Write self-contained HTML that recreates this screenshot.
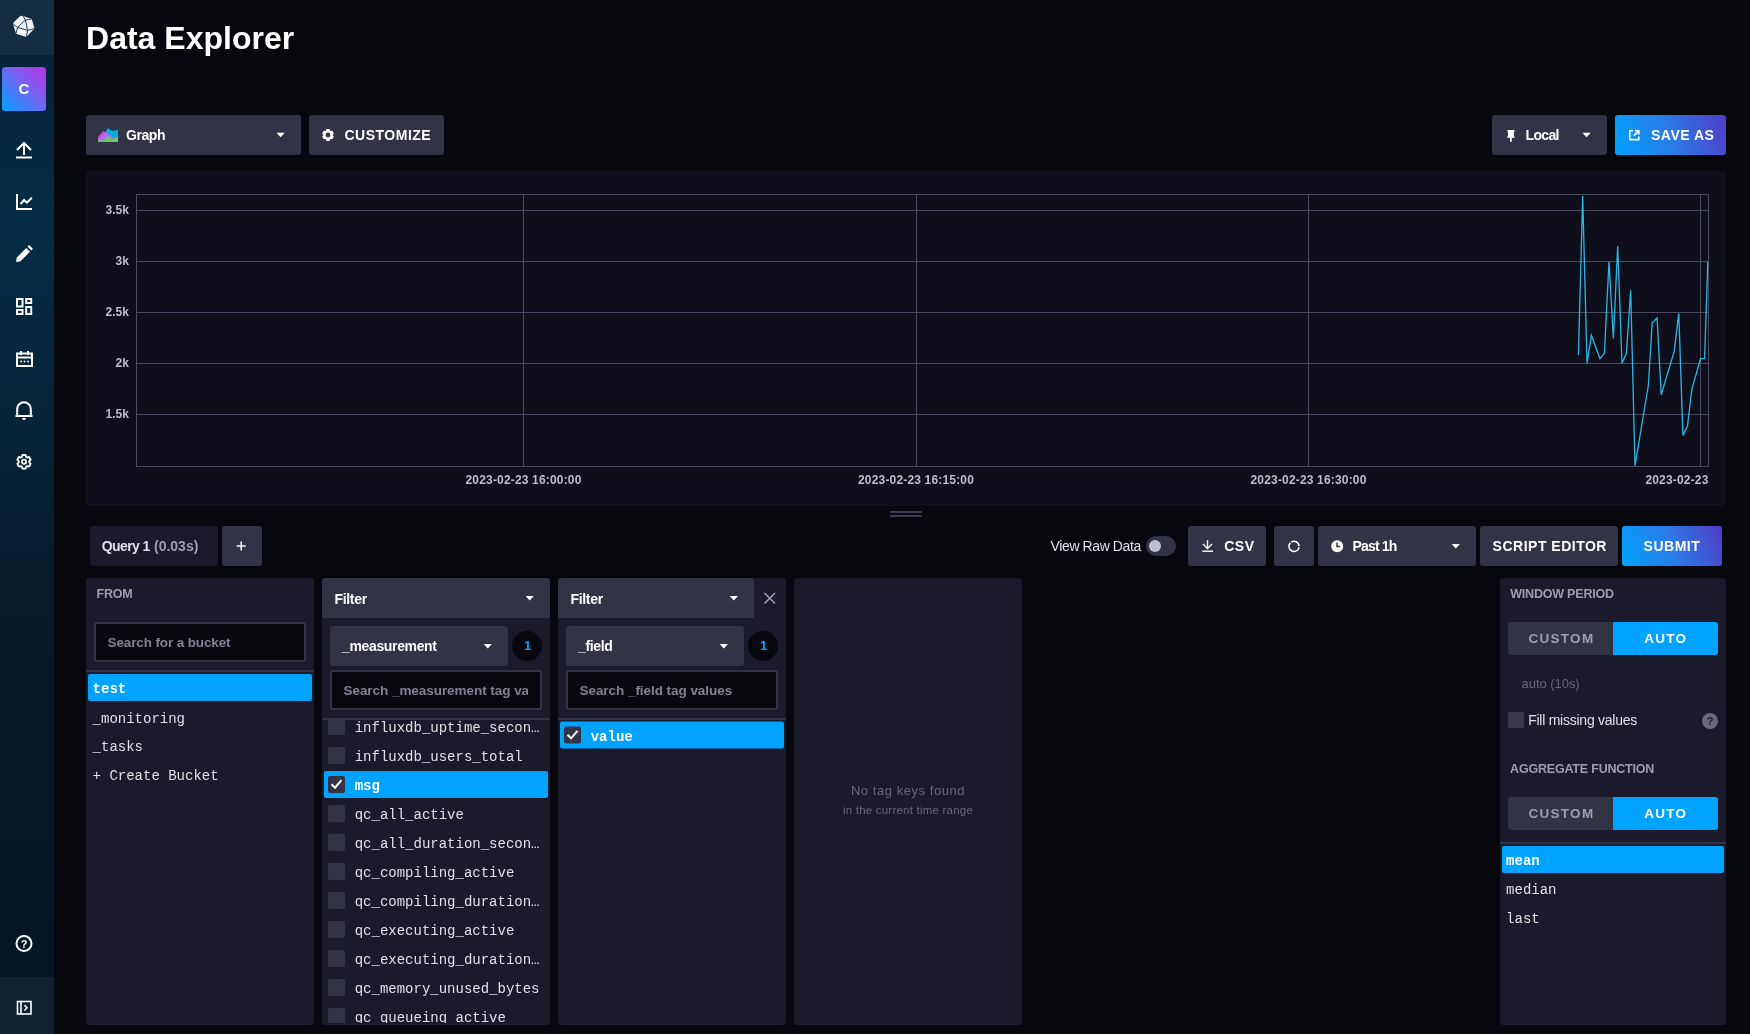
<!DOCTYPE html>
<html><head><meta charset="utf-8">
<style>
*{margin:0;padding:0}
html,body{width:1750px;height:1034px;overflow:hidden;background:#07070e}
svg{display:block}
.root{will-change:transform}
text{white-space:pre}
</style></head><body>
<svg class="root" width="1750" height="1034" viewBox="0 0 1750 1034">
<defs>
<linearGradient id="sideGrad" gradientUnits="userSpaceOnUse" x1="0" y1="55" x2="0" y2="977"><stop offset="0" stop-color="#06233a"/><stop offset="0.18" stop-color="#052c47"/><stop offset="0.35" stop-color="#05263c"/><stop offset="0.59" stop-color="#061b2b"/><stop offset="1" stop-color="#051725"/></linearGradient>
<linearGradient id="gradAvatar" x1="0" y1="1" x2="1" y2="0"><stop offset="0" stop-color="#00a3ff"/><stop offset="0.6" stop-color="#7d5ef0"/><stop offset="1" stop-color="#be2ee4"/></linearGradient>
<linearGradient id="gradBtn1" gradientUnits="userSpaceOnUse" x1="1615" y1="155" x2="1726" y2="115"><stop offset="0" stop-color="#00a3ff"/><stop offset="0.5" stop-color="#2b7ae6"/><stop offset="1" stop-color="#513cc6"/></linearGradient>
<linearGradient id="gradBtn2" gradientUnits="userSpaceOnUse" x1="1622" y1="566" x2="1722" y2="526"><stop offset="0" stop-color="#00a3ff"/><stop offset="0.5" stop-color="#2b7ae6"/><stop offset="1" stop-color="#513cc6"/></linearGradient>
</defs>

<rect x="0" y="0" width="54" height="1034" fill="url(#sideGrad)"/>
<rect x="0" y="0" width="54" height="55" fill="#132d43"/>
<rect x="0" y="977" width="54" height="57" fill="#122132"/>
<rect x="2" y="67" width="44" height="44" rx="3" fill="url(#gradAvatar)"/>
<polygon points="20.6,15.8 23,16 31.7,19 34.6,28.5 26.2,36.9 16,33.7 13.2,24.2 13.5,22.6" fill="#f1f1f3"/>
<g stroke="#132d43" stroke-width="0.9" fill="none">
<polyline points="23,16 25.4,20 17.6,27.4 13.3,24.2"/>
<polyline points="25.4,20 31.7,19"/>
<polyline points="25.4,20 27.6,30.4 34.6,28.5"/>
<polyline points="17.6,27.4 27.6,30.4 26.3,36.9"/>
<polyline points="17.6,27.4 16,33.7"/>
</g>
<g stroke="#fff" stroke-width="2" fill="none">
<polyline points="17,150 24,143 31,150"/>
<line x1="24" y1="143" x2="24" y2="155"/>
<line x1="16" y1="157.5" x2="32" y2="157.5"/>
<polyline points="17,194 17,209 32,209"/>
<polyline points="20.6,204 24.1,200 26.9,202.7 31.9,197.8"/>
<rect x="17" y="299" width="5.5" height="7.5"/>
<rect x="26.2" y="299" width="5" height="4"/>
<rect x="17" y="310" width="5.5" height="4"/>
<rect x="26.2" y="307" width="5" height="7"/>
<rect x="17" y="353.5" width="15" height="12.5"/>
<line x1="17" y1="357.5" x2="32" y2="357.5"/>
<line x1="21" y1="351" x2="21" y2="355"/>
<line x1="28" y1="351" x2="28" y2="355"/>
<path d="M17.2,415.5 V409 a6.8,6.8 0 0 1 13.6,0 V415.5"/>
<line x1="15.5" y1="416" x2="32.5" y2="416"/>
<circle cx="24" cy="461.8" r="2.1" stroke-width="1.8"/>
<path stroke-width="1.8" stroke-linejoin="round" d="M21.95,456.91 L22.37,454.99 L25.63,454.99 L26.05,456.91 L27.20,457.58 L29.08,456.98 L30.71,459.81 L29.26,461.14 L29.26,462.46 L30.71,463.79 L29.08,466.62 L27.20,466.02 L26.05,466.69 L25.63,468.61 L22.37,468.61 L21.95,466.69 L20.80,466.02 L18.92,466.62 L17.29,463.79 L18.74,462.46 L18.74,461.14 L17.29,459.81 L18.92,456.98 L20.80,457.58Z"/>
<circle cx="24" cy="943.5" r="7.5"/>
<rect x="17.5" y="1001.5" width="13.5" height="12.5" stroke-width="1.6"/>
<line x1="21" y1="1001.5" x2="21" y2="1014" stroke-width="1.6"/>
<polyline points="24.5,1005 27,1007.7 24.5,1010.4" stroke-width="1.5"/>
</g>
<g fill="#fff">
<circle cx="21" cy="361.5" r="0.9"/><circle cx="24.5" cy="361.5" r="0.9"/><circle cx="28" cy="361.5" r="0.9"/>
<path d="M22,418 h4 a2,2 0 0 1 -4,0z"/>
<path d="M16,262 L16.8,257.5 L26.3,248 L30,251.7 L20.5,261.2 Z"/>
<path d="M27.6,246.7 L29.2,245.1 L32.9,248.8 L31.3,250.4 Z"/>
</g>
<text x="24" y="947.6" font-family="Liberation Sans" font-weight="bold" font-size="11" fill="#fff" text-anchor="middle">?</text>
<text x="24" y="93.8" font-family="Liberation Sans" font-weight="bold" font-size="15" fill="#fff" text-anchor="middle">C</text>

<rect x="86" y="115" width="215" height="40" rx="3" fill="#333346" />
<rect x="309" y="115" width="135" height="40" rx="3" fill="#333346" />
<rect x="1492" y="115" width="115" height="40" rx="3" fill="#333346" />
<rect x="1615" y="115" width="111" height="40" rx="3" fill="url(#gradBtn1)" />
<rect x="86" y="171" width="1640" height="335" rx="4" fill="#0f0f1b" />
<rect x="890" y="511" width="32" height="2" rx="1" fill="#3e3e52" />
<rect x="890" y="515" width="32" height="2" rx="1" fill="#3e3e52" />
<rect x="90" y="526" width="128" height="40" rx="3" fill="#1a1a2a" />
<rect x="222" y="526" width="40" height="40" rx="3" fill="#333346" />
<rect x="1146" y="536" width="30" height="20" rx="10" fill="#333346" />
<rect x="1188" y="526" width="78" height="40" rx="3" fill="#333346" />
<rect x="1274" y="526" width="40" height="40" rx="3" fill="#333346" />
<rect x="1318" y="526" width="158" height="40" rx="3" fill="#333346" />
<rect x="1480" y="526" width="138" height="40" rx="3" fill="#333346" />
<rect x="1622" y="526" width="100" height="40" rx="3" fill="url(#gradBtn2)" />
<rect x="86" y="578" width="228" height="447" rx="3" fill="#1a1a2a" />
<rect x="322" y="578" width="228" height="447" rx="3" fill="#1a1a2a" />
<rect x="558" y="578" width="228" height="447" rx="3" fill="#1a1a2a" />
<rect x="794" y="578" width="228" height="447" rx="3" fill="#1a1a2a" />
<rect x="1500" y="578" width="226" height="447" rx="3" fill="#1a1a2a" />
<rect x="94" y="622" width="212" height="40" rx="2" fill="#333346" />
<rect x="96" y="624" width="208" height="36" rx="1" fill="#07070e" />
<rect x="86" y="670" width="228" height="2" rx="0" fill="#333346" />
<rect x="88" y="674" width="224" height="27" rx="2" fill="#00a3ff" />
<rect x="322" y="578" width="228" height="40" rx="4" fill="#333346" />
<rect x="322" y="600" width="228" height="18" rx="0" fill="#333346" />
<rect x="330" y="626" width="178" height="40" rx="3" fill="#333346" />
<rect x="330" y="670" width="212" height="40" rx="2" fill="#333346" />
<rect x="332" y="672" width="208" height="36" rx="1" fill="#07070e" />
<rect x="322" y="718" width="228" height="2" rx="0" fill="#333346" />
<rect x="324" y="771" width="224" height="27" rx="2" fill="#00a3ff" />
<rect x="558" y="578" width="196" height="40" rx="4" fill="#333346" />
<rect x="558" y="600" width="196" height="18" rx="0" fill="#333346" />
<rect x="566" y="626" width="178" height="40" rx="3" fill="#333346" />
<rect x="566" y="670" width="212" height="40" rx="2" fill="#333346" />
<rect x="568" y="672" width="208" height="36" rx="1" fill="#07070e" />
<rect x="558" y="718" width="228" height="2" rx="0" fill="#333346" />
<rect x="560" y="721.6" width="224" height="27" rx="2" fill="#00a3ff" />
<rect x="1508" y="622" width="210" height="33" rx="3" fill="#333346" />
<rect x="1613" y="622" width="105" height="33" rx="3" fill="#00a3ff" />
<rect x="1613" y="622" width="6" height="33" rx="0" fill="#00a3ff" />
<rect x="1508" y="712" width="16" height="16" rx="2" fill="#3a3a4c" />
<rect x="1508" y="797" width="210" height="33" rx="3" fill="#333346" />
<rect x="1613" y="797" width="105" height="33" rx="3" fill="#00a3ff" />
<rect x="1613" y="797" width="6" height="33" rx="0" fill="#00a3ff" />
<rect x="1500" y="842" width="226" height="2" rx="0" fill="#333346" />
<rect x="1502" y="846" width="222" height="27" rx="2" fill="#00a3ff" />
<polygon fill="#fff" points="276.5,132.8 284.70000000000005,132.8 280.6,137.3"/>
<path fill="#fff" fill-rule="evenodd" d="M326.05,130.61 L326.42,129.11 L329.58,129.11 L329.95,130.61 L330.82,131.12 L332.31,130.69 L333.89,133.42 L332.77,134.50 L332.77,135.50 L333.89,136.58 L332.31,139.31 L330.82,138.88 L329.95,139.39 L329.58,140.89 L326.42,140.89 L326.05,139.39 L325.18,138.88 L323.69,139.31 L322.11,136.58 L323.23,135.50 L323.23,134.50 L322.11,133.42 L323.69,130.69 L325.18,131.12Z M328,132.6 a2.4,2.4 0 1 0 0.01,0Z"/>
<polygon fill="#fff" points="1582.4,132.8 1590.6,132.8 1586.5,137.3"/>
<path fill="#fff" d="M1507.3,130 h7.4 l-0.9,3.2 v2.2 l1.1,2.3 h-8 l1.1,-2.3 v-2.2z"/><rect x="1510" y="137.5" width="1.8" height="4.3" fill="#fff"/>
<g stroke="#fff" stroke-width="1.6" fill="none">
<polyline points="1632.9,130.8 1629.8,130.8 1629.8,139.6 1638.8,139.6 1638.8,136.5"/>
<line x1="1634" y1="135.6" x2="1638.5" y2="131.1"/>
<polyline points="1635,130.8 1638.8,130.8 1638.8,134.5"/></g>
<svg x="97.9" y="128" width="20.2" height="14" viewBox="130 175 442 305" preserveAspectRatio="none">
<polygon fill="#00aede" points="310,235 355,175 385,205 440,235 500,230 572,215 572,480 310,480"/>
<polygon fill="#c04ed9" points="130,370 250,240 320,275 360,305 360,480 130,480"/>
<polygon fill="#b26ff3" points="130,425 300,275 335,275 450,390 500,380 572,372 572,480 130,480"/>
<polygon fill="#6bc66a" points="130,440 250,440 355,355 440,412 480,402 520,392 572,388 572,480 130,480"/>
</svg>
<g stroke="#4a4a5e" stroke-width="1" fill="none" shape-rendering="crispEdges">
<rect x="136.5" y="194.5" width="1572" height="272"/>
<line x1="137" y1="210.5" x2="1708" y2="210.5"/>
<line x1="137" y1="261.5" x2="1708" y2="261.5"/>
<line x1="137" y1="312.5" x2="1708" y2="312.5"/>
<line x1="137" y1="363.5" x2="1708" y2="363.5"/>
<line x1="137" y1="414.5" x2="1708" y2="414.5"/>
<line x1="523.5" y1="195" x2="523.5" y2="466"/>
<line x1="916" y1="195" x2="916" y2="466"/>
<line x1="1308.5" y1="195" x2="1308.5" y2="466"/>
<line x1="1700.5" y1="195" x2="1700.5" y2="466"/>
</g>
<polyline fill="none" stroke="#2fb4e6" stroke-width="1.3" points="1578.4,355.0 1582.7,196.0 1587.0,363.3 1591.4,335.4 1600.0,358.7 1604.4,353.3 1609.0,261.8 1613.4,338.4 1617.7,246.3 1622.0,363.3 1626.4,353.3 1630.7,290.2 1635.0,465.7 1648.4,385.0 1652.2,322.7 1657.1,318.0 1661.2,394.7 1674.2,351.4 1678.8,313.4 1682.9,435.4 1687.5,426.0 1691.8,389.3 1700.5,358.7 1704.6,358.7 1707.8,261.8"/>
<g stroke="#fff" stroke-width="1.5"><line x1="236.7" y1="546" x2="245.7" y2="546"/><line x1="241.2" y1="541.5" x2="241.2" y2="550.5"/></g>
<circle cx="1155" cy="546" r="6" fill="#bebecc"/>
<g stroke="#fff" stroke-width="1.4" fill="none">
<line x1="1207.5" y1="540.2" x2="1207.5" y2="548.5"/>
<polyline points="1203,544 1207.5,548.5 1212,544"/>
<line x1="1202.3" y1="551.2" x2="1213" y2="551.2"/></g>
<g stroke="#fff" stroke-width="1.5" fill="none"><path d="M1291.30,542.07 A5.1,5.1 0 0 1 1299.05,545.69"/><path d="M1299.05,547.11 A5.1,5.1 0 1 1 1290.21,542.99"/></g>
<polygon fill="#fff" points="1289.17,542.05 1291.25,543.92 1289.27,544.49"/>
<polygon fill="#fff" points="1300.44,545.50 1297.66,545.89 1298.50,544.01"/>
<circle cx="1337.2" cy="546.2" r="6" fill="#fff"/><polyline points="1337,542.5 1337,546.6 1340,546.6" stroke="#333346" stroke-width="1.5" fill="none"/>
<polygon fill="#fff" points="1451.7,543.9 1459.8999999999999,543.9 1455.8,548.4"/>
<polygon fill="#fff" points="525.6,596 533.8000000000001,596 529.7,600.5"/>
<polygon fill="#fff" points="483.7,643.9 491.90000000000003,643.9 487.8,648.4"/>
<circle cx="527" cy="646" r="15" fill="#07070e"/>
<polygon fill="#fff" points="729.6999999999999,596 737.9,596 733.8,600.5"/>
<g stroke="#9e9eaf" stroke-width="1.6"><line x1="764.5" y1="593" x2="775" y2="603.5"/><line x1="775" y1="593" x2="764.5" y2="603.5"/></g>
<polygon fill="#fff" points="719.6999999999999,643.9 727.9,643.9 723.8,648.4"/>
<circle cx="763" cy="646" r="15" fill="#07070e"/>
<circle cx="1710" cy="721" r="8" fill="#68687b"/>
<text x="86" y="49" fill="#fff" font-family="Liberation Sans" text-anchor="start" style="font-size:32px;font-weight:bold;letter-spacing:0.02px">Data Explorer</text>
<text x="126" y="140" fill="#fff" font-family="Liberation Sans" text-anchor="start" style="font-size:14px;font-weight:bold;letter-spacing:-0.45px">Graph</text>
<text x="344.5" y="140" fill="#fff" font-family="Liberation Sans" text-anchor="start" style="font-size:14px;font-weight:bold;letter-spacing:0.5px">CUSTOMIZE</text>
<text x="1525.5" y="140" fill="#fff" font-family="Liberation Sans" text-anchor="start" style="font-size:14px;font-weight:bold;letter-spacing:-0.65px">Local</text>
<text x="1651" y="140" fill="#fff" font-family="Liberation Sans" text-anchor="start" style="font-size:14px;font-weight:bold;letter-spacing:0.5px">SAVE AS</text>
<text x="128.9" y="214" fill="#bebecc" font-family="Liberation Sans" text-anchor="end" style="font-size:12px;font-weight:bold;letter-spacing:0px">3.5k</text>
<text x="128.9" y="265" fill="#bebecc" font-family="Liberation Sans" text-anchor="end" style="font-size:12px;font-weight:bold;letter-spacing:0px">3k</text>
<text x="128.9" y="316" fill="#bebecc" font-family="Liberation Sans" text-anchor="end" style="font-size:12px;font-weight:bold;letter-spacing:0px">2.5k</text>
<text x="128.9" y="367" fill="#bebecc" font-family="Liberation Sans" text-anchor="end" style="font-size:12px;font-weight:bold;letter-spacing:0px">2k</text>
<text x="128.9" y="418" fill="#bebecc" font-family="Liberation Sans" text-anchor="end" style="font-size:12px;font-weight:bold;letter-spacing:0px">1.5k</text>
<text x="523.5" y="484.2" fill="#bebecc" font-family="Liberation Sans" text-anchor="middle" style="font-size:12px;font-weight:bold;letter-spacing:0.17px">2023-02-23 16:00:00</text>
<text x="916" y="484.2" fill="#bebecc" font-family="Liberation Sans" text-anchor="middle" style="font-size:12px;font-weight:bold;letter-spacing:0.17px">2023-02-23 16:15:00</text>
<text x="1308.5" y="484.2" fill="#bebecc" font-family="Liberation Sans" text-anchor="middle" style="font-size:12px;font-weight:bold;letter-spacing:0.17px">2023-02-23 16:30:00</text>
<text x="1708.5" y="484.2" fill="#bebecc" font-family="Liberation Sans" text-anchor="end" style="font-size:12px;font-weight:bold;letter-spacing:0.17px">2023-02-23</text>
<text x="101.8" y="551" fill="#e0e0e8" font-family="Liberation Sans" text-anchor="start" style="font-size:14px;font-weight:bold;letter-spacing:-0.6px">Query 1</text>
<text x="154" y="551" fill="#9e9eaf" font-family="Liberation Sans" text-anchor="start" style="font-size:14px;font-weight:bold;letter-spacing:0px">(0.03s)</text>
<text x="1050.6" y="551" fill="#e0e0e8" font-family="Liberation Sans" text-anchor="start" style="font-size:14px;font-weight:normal;letter-spacing:-0.4px">View Raw Data</text>
<text x="1224.2" y="551.2" fill="#fff" font-family="Liberation Sans" text-anchor="start" style="font-size:14px;font-weight:bold;letter-spacing:0.5px">CSV</text>
<text x="1352.4" y="551" fill="#fff" font-family="Liberation Sans" text-anchor="start" style="font-size:14px;font-weight:bold;letter-spacing:-0.8px">Past 1h</text>
<text x="1492.6" y="551.3" fill="#fff" font-family="Liberation Sans" text-anchor="start" style="font-size:14px;font-weight:bold;letter-spacing:0.5px">SCRIPT EDITOR</text>
<text x="1643.6" y="551.3" fill="#fff" font-family="Liberation Sans" text-anchor="start" style="font-size:14px;font-weight:bold;letter-spacing:0.5px">SUBMIT</text>
<text x="96.5" y="598.1" fill="#9e9eaf" font-family="Liberation Sans" text-anchor="start" style="font-size:12.5px;font-weight:bold;letter-spacing:-0.2px">FROM</text>
<text x="107.6" y="647" fill="#828294" font-family="Liberation Sans" text-anchor="start" style="font-size:13.5px;font-weight:bold;letter-spacing:-0.13px">Search for a bucket</text>
<text x="92.6" y="693.4" fill="#fff" font-family="Liberation Mono" text-anchor="start" style="font-size:14px;font-weight:bold;letter-spacing:0px">test</text>
<text x="92.6" y="722.6" fill="#e0e0e8" font-family="Liberation Mono" text-anchor="start" style="font-size:14px;font-weight:normal;letter-spacing:0px">_monitoring</text>
<text x="92.6" y="751" fill="#e0e0e8" font-family="Liberation Mono" text-anchor="start" style="font-size:14px;font-weight:normal;letter-spacing:0px">_tasks</text>
<text x="92.6" y="779.8" fill="#e0e0e8" font-family="Liberation Mono" text-anchor="start" style="font-size:14px;font-weight:normal;letter-spacing:0px">+ Create Bucket</text>
<text x="334.4" y="603.5" fill="#fff" font-family="Liberation Sans" text-anchor="start" style="font-size:14px;font-weight:bold;letter-spacing:-0.3px">Filter</text>
<text x="342" y="651.2" fill="#fff" font-family="Liberation Sans" text-anchor="start" style="font-size:14px;font-weight:bold;letter-spacing:-0.35px">_measurement</text>
<text x="527.5" y="650.2" fill="#00a3ff" font-family="Liberation Sans" text-anchor="middle" style="font-size:13px;font-weight:bold;letter-spacing:0px">1</text>
<svg x="332" y="672" width="196" height="36"><g transform="translate(-332,-672)">
<text x="343.5" y="695.2" fill="#828294" font-family="Liberation Sans" text-anchor="start" style="font-size:13.5px;font-weight:bold;letter-spacing:-0.05px">Search _measurement tag values</text>
</g></svg>
<svg x="322" y="720" width="228" height="303"><g transform="translate(-322,-720)">
<rect x="328" y="718" width="17" height="17" rx="2" fill="#333346"/>
<text x="354.7" y="732" fill="#e0e0e8" font-family="Liberation Mono" text-anchor="start" style="font-size:14px;font-weight:normal;letter-spacing:0px">influxdb_uptime_secon…</text>
<rect x="328" y="747" width="17" height="17" rx="2" fill="#333346"/>
<text x="354.7" y="761" fill="#e0e0e8" font-family="Liberation Mono" text-anchor="start" style="font-size:14px;font-weight:normal;letter-spacing:0px">influxdb_users_total</text>
<rect x="328" y="776" width="17" height="17" rx="2" fill="#333346"/>
<polyline points="331.5,784.2 335,787.7 341.5,780.2" stroke="#fff" stroke-width="2" fill="none"/>
<text x="354.7" y="790" fill="#fff" font-family="Liberation Mono" text-anchor="start" style="font-size:14px;font-weight:bold;letter-spacing:0px">msg</text>
<rect x="328" y="805" width="17" height="17" rx="2" fill="#333346"/>
<text x="354.7" y="819" fill="#e0e0e8" font-family="Liberation Mono" text-anchor="start" style="font-size:14px;font-weight:normal;letter-spacing:0px">qc_all_active</text>
<rect x="328" y="834" width="17" height="17" rx="2" fill="#333346"/>
<text x="354.7" y="848" fill="#e0e0e8" font-family="Liberation Mono" text-anchor="start" style="font-size:14px;font-weight:normal;letter-spacing:0px">qc_all_duration_secon…</text>
<rect x="328" y="863" width="17" height="17" rx="2" fill="#333346"/>
<text x="354.7" y="877" fill="#e0e0e8" font-family="Liberation Mono" text-anchor="start" style="font-size:14px;font-weight:normal;letter-spacing:0px">qc_compiling_active</text>
<rect x="328" y="892" width="17" height="17" rx="2" fill="#333346"/>
<text x="354.7" y="906" fill="#e0e0e8" font-family="Liberation Mono" text-anchor="start" style="font-size:14px;font-weight:normal;letter-spacing:0px">qc_compiling_duration…</text>
<rect x="328" y="921" width="17" height="17" rx="2" fill="#333346"/>
<text x="354.7" y="935" fill="#e0e0e8" font-family="Liberation Mono" text-anchor="start" style="font-size:14px;font-weight:normal;letter-spacing:0px">qc_executing_active</text>
<rect x="328" y="950" width="17" height="17" rx="2" fill="#333346"/>
<text x="354.7" y="964" fill="#e0e0e8" font-family="Liberation Mono" text-anchor="start" style="font-size:14px;font-weight:normal;letter-spacing:0px">qc_executing_duration…</text>
<rect x="328" y="979" width="17" height="17" rx="2" fill="#333346"/>
<text x="354.7" y="993" fill="#e0e0e8" font-family="Liberation Mono" text-anchor="start" style="font-size:14px;font-weight:normal;letter-spacing:0px">qc_memory_unused_bytes</text>
<rect x="328" y="1008" width="17" height="17" rx="2" fill="#333346"/>
<text x="354.7" y="1022" fill="#e0e0e8" font-family="Liberation Mono" text-anchor="start" style="font-size:14px;font-weight:normal;letter-spacing:0px">qc_queueing_active</text>
</g></svg>
<text x="570.4" y="603.5" fill="#fff" font-family="Liberation Sans" text-anchor="start" style="font-size:14px;font-weight:bold;letter-spacing:-0.3px">Filter</text>
<text x="578" y="651.2" fill="#fff" font-family="Liberation Sans" text-anchor="start" style="font-size:14px;font-weight:bold;letter-spacing:-0.35px">_field</text>
<text x="763.5" y="650.2" fill="#00a3ff" font-family="Liberation Sans" text-anchor="middle" style="font-size:13px;font-weight:bold;letter-spacing:0px">1</text>
<svg x="568" y="672" width="196" height="36"><g transform="translate(-568,-672)">
<text x="579.5" y="695.2" fill="#828294" font-family="Liberation Sans" text-anchor="start" style="font-size:13.5px;font-weight:bold;letter-spacing:-0.05px">Search _field tag values</text>
</g></svg>
<svg x="558" y="720" width="228" height="303"><g transform="translate(-558,-720)">
<rect x="564" y="726.6" width="17" height="17" rx="2" fill="#333346"/>
<polyline points="567.5,734.8000000000001 571,738.3000000000001 577.5,730.8000000000001" stroke="#fff" stroke-width="2" fill="none"/>
<text x="590.7" y="740.6" fill="#fff" font-family="Liberation Mono" text-anchor="start" style="font-size:14px;font-weight:bold;letter-spacing:0px">value</text>
</g></svg>
<text x="908" y="794.9" fill="#68687b" font-family="Liberation Sans" text-anchor="middle" style="font-size:13px;font-weight:normal;letter-spacing:0.55px">No tag keys found</text>
<text x="908" y="814.1" fill="#68687b" font-family="Liberation Sans" text-anchor="middle" style="font-size:11.5px;font-weight:normal;letter-spacing:0.22px">in the current time range</text>
<text x="1510.2" y="598.1" fill="#9e9eaf" font-family="Liberation Sans" text-anchor="start" style="font-size:12.5px;font-weight:bold;letter-spacing:-0.2px">WINDOW PERIOD</text>
<text x="1528.4" y="643" fill="#9e9eaf" font-family="Liberation Sans" text-anchor="start" style="font-size:13.5px;font-weight:bold;letter-spacing:1.3px">CUSTOM</text>
<text x="1644.2" y="643" fill="#fff" font-family="Liberation Sans" text-anchor="start" style="font-size:13.5px;font-weight:bold;letter-spacing:1.3px">AUTO</text>
<text x="1521.6" y="687.7" fill="#68687b" font-family="Liberation Sans" text-anchor="start" style="font-size:13px;font-weight:normal;letter-spacing:-0.05px">auto (10s)</text>
<text x="1528.2" y="725.3" fill="#e0e0e8" font-family="Liberation Sans" text-anchor="start" style="font-size:14px;font-weight:normal;letter-spacing:-0.25px">Fill missing values</text>
<text x="1710" y="725" fill="#1a1a2a" font-family="Liberation Sans" text-anchor="middle" style="font-size:11px;font-weight:bold;letter-spacing:0px">?</text>
<text x="1510.1" y="773" fill="#9e9eaf" font-family="Liberation Sans" text-anchor="start" style="font-size:12.5px;font-weight:bold;letter-spacing:-0.2px">AGGREGATE FUNCTION</text>
<text x="1528.4" y="818" fill="#9e9eaf" font-family="Liberation Sans" text-anchor="start" style="font-size:13.5px;font-weight:bold;letter-spacing:1.3px">CUSTOM</text>
<text x="1644.2" y="818" fill="#fff" font-family="Liberation Sans" text-anchor="start" style="font-size:13.5px;font-weight:bold;letter-spacing:1.3px">AUTO</text>
<text x="1506.1" y="864.9" fill="#fff" font-family="Liberation Mono" text-anchor="start" style="font-size:14px;font-weight:bold;letter-spacing:0px">mean</text>
<text x="1506.1" y="893.7" fill="#e0e0e8" font-family="Liberation Mono" text-anchor="start" style="font-size:14px;font-weight:normal;letter-spacing:0px">median</text>
<text x="1506.1" y="923" fill="#e0e0e8" font-family="Liberation Mono" text-anchor="start" style="font-size:14px;font-weight:normal;letter-spacing:0px">last</text>
</svg>
</body></html>
